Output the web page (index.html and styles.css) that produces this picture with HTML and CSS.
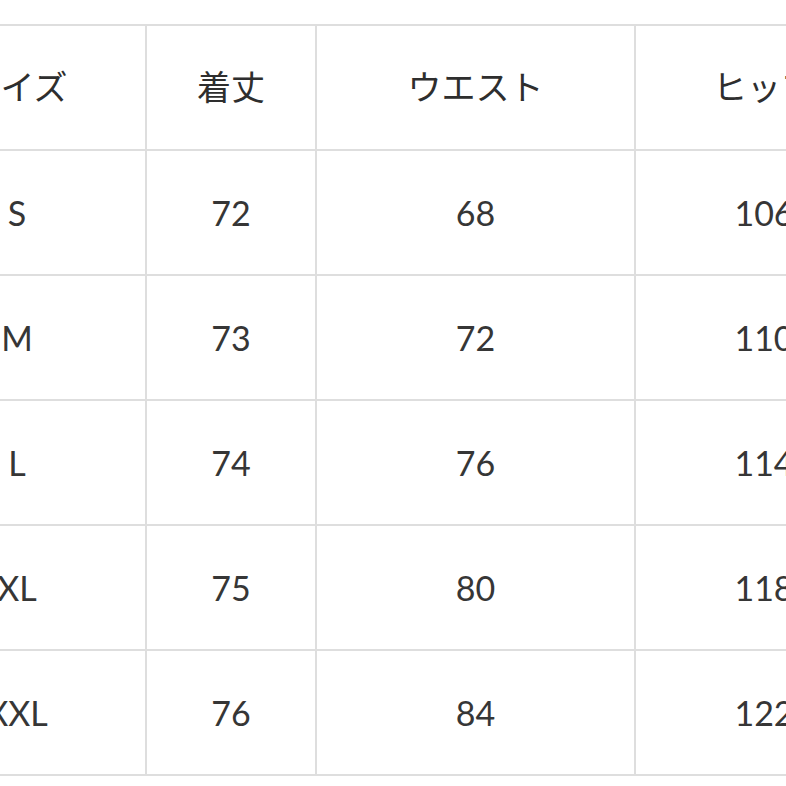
FILE: index.html
```html
<!DOCTYPE html>
<html lang="ja">
<head>
<meta charset="utf-8">
<title>サイズ表</title>
<link rel="stylesheet" href="styles.css">
</head>
<body>
<div class="viewport">
  <div class="size-table">
    <div class="cell head">サイズ</div>
    <div class="cell head">着丈</div>
    <div class="cell head">ウエスト</div>
    <div class="cell head">ヒップ</div>

    <div class="cell">S</div>
    <div class="cell">72</div>
    <div class="cell">68</div>
    <div class="cell">106</div>

    <div class="cell">M</div>
    <div class="cell">73</div>
    <div class="cell">72</div>
    <div class="cell">110</div>

    <div class="cell">L</div>
    <div class="cell">74</div>
    <div class="cell">76</div>
    <div class="cell">114</div>

    <div class="cell">XL</div>
    <div class="cell">75</div>
    <div class="cell">80</div>
    <div class="cell">118</div>

    <div class="cell">XXL</div>
    <div class="cell">76</div>
    <div class="cell">84</div>
    <div class="cell">122</div>
  </div>
</div>
</body>
</html>
```

FILE: styles.css
```css
html, body {
  margin: 0;
  padding: 0;
  background: #ffffff;
  overflow: hidden;
}

.viewport {
  width: 786px;
  height: 786px;
  overflow: hidden;
  padding-top: 24px;
  box-sizing: border-box;
}

.size-table {
  display: grid;
  grid-template-columns: 256px 168px 317px 256px;
  grid-auto-rows: 123px;
  gap: 2px;
  padding: 2px;
  background: #dedede;
  width: max-content;
  margin-left: -113px;
}

.cell {
  background: #ffffff;
  display: flex;
  align-items: center;
  justify-content: center;
  font-family: Lato, "Noto Sans CJK JP", sans-serif;
  font-size: 34px;
  color: #363636;
}

.cell.head {
  font-family: "Noto Sans CJK JP", sans-serif;
  font-size: 34px;
  font-weight: 400;
  color: #2e2e2e;
  padding-bottom: 4px;
  box-sizing: border-box;
}
```
